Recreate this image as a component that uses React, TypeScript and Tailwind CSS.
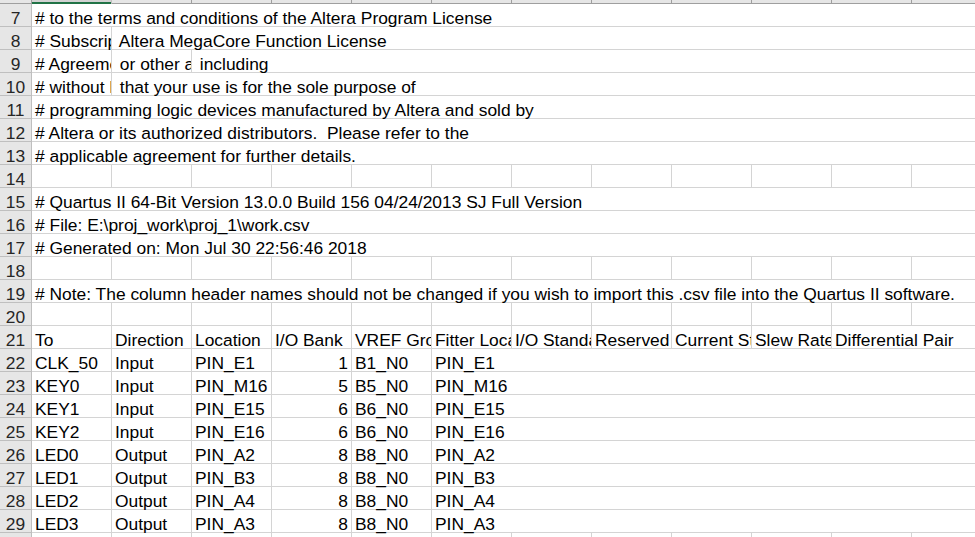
type Cell = { text: string; right?: boolean }

const COLS = 12
const COL_W = 80

// rows 7..30, each row lists column texts from A onward
const rows: { n: number; cells: (string | Cell)[] }[] = [
  { n: 7, cells: ['# to the terms and conditions of the Altera Program License'] },
  { n: 8, cells: ['# Subscription Agreement', ' Altera MegaCore Function License'] },
  { n: 9, cells: ['# Agreement', ' or other applicable license agreement', ' including'] },
  { n: 10, cells: ['# without limitation', ' that your use is for the sole purpose of'] },
  { n: 11, cells: ['# programming logic devices manufactured by Altera and sold by'] },
  { n: 12, cells: ['# Altera or its authorized distributors.  Please refer to the'] },
  { n: 13, cells: ['# applicable agreement for further details.'] },
  { n: 14, cells: [] },
  { n: 15, cells: ['# Quartus II 64-Bit Version 13.0.0 Build 156 04/24/2013 SJ Full Version'] },
  { n: 16, cells: ['# File: E:\\proj_work\\proj_1\\work.csv'] },
  { n: 17, cells: ['# Generated on: Mon Jul 30 22:56:46 2018'] },
  { n: 18, cells: [] },
  {
    n: 19,
    cells: [
      '# Note: The column header names should not be changed if you wish to import this .csv file into the Quartus II software.',
    ],
  },
  { n: 20, cells: [] },
  {
    n: 21,
    cells: [
      'To',
      'Direction',
      'Location',
      'I/O Bank',
      'VREF Group',
      'Fitter Location',
      'I/O Standard',
      'Reserved',
      'Current Strength',
      'Slew Rate',
      'Differential Pair',
    ],
  },
  { n: 22, cells: ['CLK_50', 'Input', 'PIN_E1', { text: '1', right: true }, 'B1_N0', 'PIN_E1'] },
  { n: 23, cells: ['KEY0', 'Input', 'PIN_M16', { text: '5', right: true }, 'B5_N0', 'PIN_M16'] },
  { n: 24, cells: ['KEY1', 'Input', 'PIN_E15', { text: '6', right: true }, 'B6_N0', 'PIN_E15'] },
  { n: 25, cells: ['KEY2', 'Input', 'PIN_E16', { text: '6', right: true }, 'B6_N0', 'PIN_E16'] },
  { n: 26, cells: ['LED0', 'Output', 'PIN_A2', { text: '8', right: true }, 'B8_N0', 'PIN_A2'] },
  { n: 27, cells: ['LED1', 'Output', 'PIN_B3', { text: '8', right: true }, 'B8_N0', 'PIN_B3'] },
  { n: 28, cells: ['LED2', 'Output', 'PIN_A4', { text: '8', right: true }, 'B8_N0', 'PIN_A4'] },
  { n: 29, cells: ['LED3', 'Output', 'PIN_A3', { text: '8', right: true }, 'B8_N0', 'PIN_A3'] },
  { n: 30, cells: [] },
]

function toCell(c: string | Cell | undefined): Cell | null {
  if (c === undefined || c === '') return null
  return typeof c === 'string' ? { text: c } : c
}

function SheetRow({ n, cells }: { n: number; cells: (string | Cell)[] }) {
  const out = []
  let i = 0
  while (i < COLS) {
    const c = toCell(cells[i])
    // left-aligned text spills over empty neighbours, like Excel does
    let span = 1
    if (c && !c.right) {
      while (i + span < COLS && !toCell(cells[i + span])) span++
    }
    out.push(
      <div
        key={i}
        className={`h-full shrink-0 overflow-x-clip whitespace-pre border-r border-b border-[#d4d4d4] flex items-end px-[3px] ${
          c?.right ? 'justify-end' : ''
        }`}
        style={{ width: span * COL_W }}
      >
        {c && <span className="leading-[16px]">{c.text}</span>}
      </div>
    )
    i += span
  }
  return (
    <div className="flex h-[23px] shrink-0">
      <div className="w-[32px] h-full shrink-0 bg-[#e6e6e6] border-r border-b border-[#bfbfbf] flex items-end justify-center leading-[16px] text-[#262626]">
        {n}
      </div>
      {out}
    </div>
  )
}

export default function App() {
  return (
    <div
      className="w-[975px] h-[537px] overflow-hidden bg-white text-[17.4px] text-black flex flex-col"
      style={{ fontFamily: '"Liberation Sans", Arial, sans-serif' }}
    >
      {/* column header strip (scrolled mostly off the top) */}
      <div className="flex h-[4px] shrink-0">
        <div className="w-[32px] shrink-0 bg-[#e6e6e6] border-r border-b border-[#9f9f9f]" />
        <div className="w-[80px] shrink-0 bg-[#d2d2d2] border-r border-[#bfbfbf] flex flex-col">
          <div className="flex-1" />
          <div className="h-[2px] bg-[#217346]" />
        </div>
        {Array.from({ length: COLS - 1 }).map((_, k) => (
          <div key={k} className="w-[80px] shrink-0 bg-[#e6e6e6] border-r border-b border-[#9f9f9f]" />
        ))}
      </div>
      {rows.map((r) => (
        <SheetRow key={r.n} n={r.n} cells={r.cells} />
      ))}
    </div>
  )
}
